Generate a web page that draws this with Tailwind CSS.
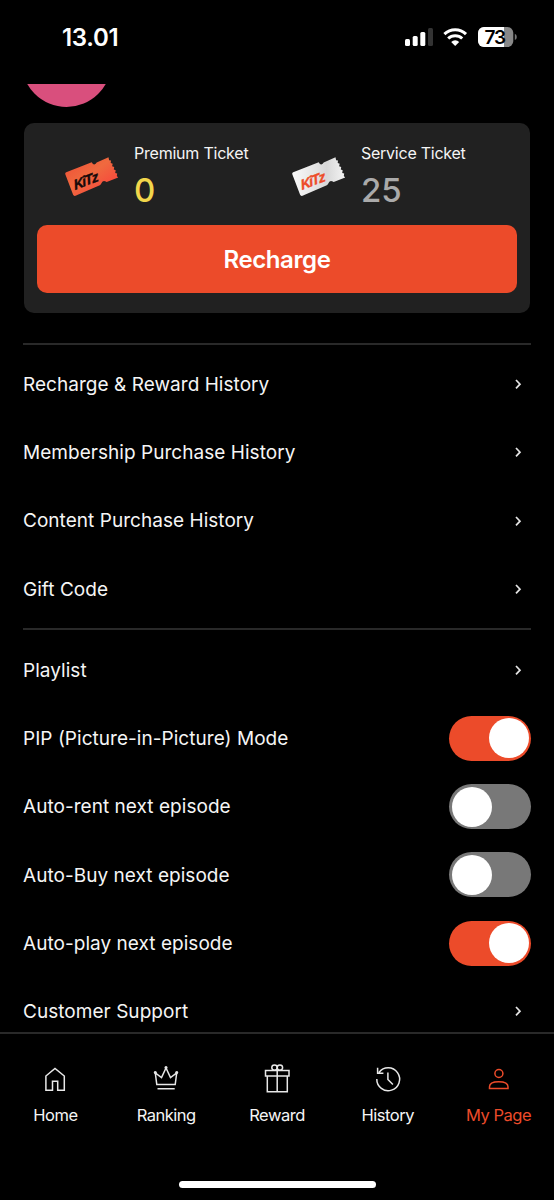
<!DOCTYPE html>
<html lang="en">
<head>
<meta charset="utf-8">
<meta name="viewport" content="width=device-width, initial-scale=1">
<title>My Page</title>
<script src="https://cdn.jsdelivr.net/npm/@tailwindcss/browser@4"></script>
</head>
<body class="bg-black">
<div class="flex h-[1200px] w-[554px] flex-col overflow-hidden bg-black font-['Inter','Liberation_Sans',sans-serif] text-[#f5f5f5]">
  <header class="flex h-[84px] shrink-0 items-start justify-between pt-[20px] pr-[37px] pl-[62px]">
    <div class="pt-[1px] text-[24px] leading-[34px] font-semibold tracking-[-0.3px] text-white">13.01</div>
    <svg class="mt-[5px]" width="112" height="24" viewBox="0 0 112 24">
      <g fill="#fff">
        <rect x="0" y="14" width="5" height="7" rx="1.500"/>
        <rect x="7.700" y="11" width="5" height="10" rx="1.500"/>
        <rect x="15.300" y="7" width="5" height="14" rx="1.500"/>
        <rect x="23" y="3" width="5" height="18" rx="1.500" fill="#333"/>
        <path d="M50.200 21l-4-4.100a6 6 0 0 1 8 0z"/>
      </g>
      <g fill="none" stroke="#fff" stroke-width="3">
        <path d="M39.400 9.200a15.500 15.500 0 0 1 21.600 0"/>
        <path d="M43.200 13.500a10 10 0 0 1 14 0"/>
      </g>
      <defs><clipPath id="cell"><rect x="73" y="2" width="35.300" height="20" rx="6"/></clipPath></defs>
      <g clip-path="url(#cell)"><rect x="73" y="2" width="36" height="20" fill="#888"/><rect x="73" y="2" width="26" height="20" fill="#fff"/></g>
      <path d="M109.800 8.700q2 1 2 3.200t-2 3.200z" fill="#777"/>
      <text x="79.500" y="18.800" font-size="19" font-weight="600" textLength="21.500" fill="#000">73</text>
    </svg>
  </header>
  <main class="flex min-h-0 flex-1 flex-col overflow-hidden">
    <div class="h-[39px] shrink-0 pl-[22px]">
      <svg width="90" height="24" viewBox="0 0 90 24"><circle cx="44.500" cy="-22" r="45" fill="#d94f7d"/></svg>
    </div>
    <section class="mx-[24px] flex h-[190px] shrink-0 flex-col rounded-[10px] bg-[#212121] px-[13px] pt-[18px]">
      <div class="flex h-[84px]">
        <div class="flex w-[227px] pl-[27px]">
          <svg class="mt-[13px] shrink-0" width="70" height="45" viewBox="0 0 70 45">
            <defs><linearGradient id="red" x1="0" y1="0" x2="1" y2="1"><stop offset="0" stop-color="#f04b35"/><stop offset=".45" stop-color="#ef6a3f"/><stop offset="1" stop-color="#fb363b"/></linearGradient></defs>
            <path d="M2.200 18.300L27.700 8.200q2.300 4.200 5 .3L44.500 3.300l.6 2.900 1.900.3-.3 2.600 2 .6-.6 2.600 2.100.7-.4 2.600 1.900.7-.5 2.600 2 .7-.4 2.500 1.400 1.500-11.500 4.500q-4.200-2.600-5.400 1.500-.5 1.200-1.500 1.700L11.500 41.800q-1.700.6-2.400-1L1.300 20.200q-.5-1.500.9-1.900z" fill="url(#red)"/>
            <text transform="translate(11 36) rotate(-21) skewX(-8)" font-family="Liberation Sans, sans-serif" font-size="14" font-weight="700" font-style="italic" letter-spacing="-1.200" fill="#17090a" stroke="#17090a" stroke-width=".4">KiTz</text>
          </svg>
          <div class="flex flex-col">
            <div class="h-[25px] text-[16px] leading-[25px] tracking-[-0.22px] whitespace-nowrap">Premium Ticket</div>
            <div class="mt-[3px] text-[33px] leading-[42px] font-medium tracking-[-0.2px] text-[#f2d64b]">0</div>
          </div>
        </div>
        <div class="flex pl-[27px]">
          <svg class="mt-[13px] shrink-0" width="70" height="45" viewBox="0 0 70 45">
            <defs><linearGradient id="silver"><stop offset="0" stop-color="#fafafa"/><stop offset=".65" stop-color="#d8d8d8"/><stop offset="1" stop-color="#f4f4f4"/></linearGradient></defs>
            <path d="M2.200 18.300L27.700 8.200q2.300 4.200 5 .3L44.500 3.300l.6 2.900 1.900.3-.3 2.600 2 .6-.6 2.600 2.100.7-.4 2.600 1.900.7-.5 2.600 2 .7-.4 2.500 1.400 1.500-11.500 4.500q-4.200-2.600-5.400 1.500-.5 1.200-1.500 1.700L11.500 41.800q-1.700.6-2.400-1L1.300 20.200q-.5-1.500.9-1.900z" fill="url(#silver)"/>
            <text transform="translate(11 36) rotate(-21) skewX(-8)" font-family="Liberation Sans, sans-serif" font-size="14" font-weight="700" font-style="italic" letter-spacing="-1.200" fill="#ed4b28" stroke="#ed4b28" stroke-width=".4">KiTz</text>
          </svg>
          <div class="flex flex-col">
            <div class="h-[25px] text-[16px] leading-[25px] tracking-[-0.25px] whitespace-nowrap">Service Ticket</div>
            <div class="mt-[3px] text-[33px] leading-[42px] font-medium tracking-[-0.2px] text-[#aaa]">25</div>
          </div>
        </div>
      </div>
      <button class="h-[68px] rounded-[10px] bg-[#ec4b2a] pt-[2px] text-[24px] font-semibold tracking-[-0.4px] text-white">Recharge</button>
    </section>
    <div class="mx-[23px] mt-[30px] h-[2px] shrink-0 bg-[#292929]"></div>
    <nav class="mt-[5px] flex shrink-0 flex-col pr-[23px] pl-[23px] text-[19px] tracking-[0.04px] [&_span]:pt-[2px] [&>div]:flex [&>div]:h-[68.250px] [&>div]:items-center [&>div]:justify-between [&_svg]:mr-[8px]">
      <div><span>Recharge &amp; Reward History</span><svg width="10" height="14" viewBox="0 0 10 14" fill="none" stroke="#e4e4e4" stroke-width="1.700"><path d="M3 3L7 7.200l-4 4.200"/></svg></div>
      <div><span>Membership Purchase History</span><svg width="10" height="14" viewBox="0 0 10 14" fill="none" stroke="#e4e4e4" stroke-width="1.700"><path d="M3 3L7 7.200l-4 4.200"/></svg></div>
      <div><span>Content Purchase History</span><svg width="10" height="14" viewBox="0 0 10 14" fill="none" stroke="#e4e4e4" stroke-width="1.700"><path d="M3 3L7 7.200l-4 4.200"/></svg></div>
      <div><span>Gift Code</span><svg width="10" height="14" viewBox="0 0 10 14" fill="none" stroke="#e4e4e4" stroke-width="1.700"><path d="M3 3L7 7.200l-4 4.200"/></svg></div>
    </nav>
    <div class="mx-[23px] mt-[5px] h-[2px] shrink-0 bg-[#292929]"></div>
    <section class="mt-[6px] flex shrink-0 flex-col pr-[23px] pl-[23px] text-[19px] tracking-[0.04px] [&_span]:pt-[2px] [&>div]:flex [&>div]:h-[68.250px] [&>div]:items-center [&>div]:justify-between [&_svg]:mr-[8px]">
      <div><span>Playlist</span><svg width="10" height="14" viewBox="0 0 10 14" fill="none" stroke="#e4e4e4" stroke-width="1.700"><path d="M3 3L7 7.200l-4 4.200"/></svg></div>
      <div><span>PIP (Picture-in-Picture) Mode</span><i class="flex h-[45px] w-[82px] items-center justify-end rounded-full bg-[#ec4b2a] px-[2.500px]"><b class="size-[40px] rounded-full bg-white"></b></i></div>
      <div><span>Auto-rent next episode</span><i class="flex h-[45px] w-[82px] items-center rounded-full bg-[#787878] px-[2.500px]"><b class="size-[40px] rounded-full bg-white"></b></i></div>
      <div><span>Auto-Buy next episode</span><i class="flex h-[45px] w-[82px] items-center rounded-full bg-[#787878] px-[2.500px]"><b class="size-[40px] rounded-full bg-white"></b></i></div>
      <div><span>Auto-play next episode</span><i class="flex h-[45px] w-[82px] items-center justify-end rounded-full bg-[#ec4b2a] px-[2.500px]"><b class="size-[40px] rounded-full bg-white"></b></i></div>
      <div><span>Customer Support</span><svg width="10" height="14" viewBox="0 0 10 14" fill="none" stroke="#e4e4e4" stroke-width="1.700"><path d="M3 3L7 7.200l-4 4.200"/></svg></div>
    </section>
  </main>
  <footer class="flex h-[168px] shrink-0 flex-col items-center border-t-2 border-[#292929] bg-black">
    <div class="grid w-full grid-cols-5 pt-[27px] text-[16.500px] tracking-[-0.500px] [&>div]:flex [&>div]:flex-col [&>div]:items-center [&>div]:gap-[6px] [&_span]:leading-[24px] [&_span]:whitespace-nowrap">
      <div><svg width="36" height="36" viewBox="0 0 36 36" fill="none" stroke="#e8e8e8" stroke-width="1.500"><path d="M8.900 15L18 7.500l9.300 7.500v14.200h-6.600v-9h-5.200v9H8.900z"/></svg><span>Home</span></div>
      <div><svg width="36" height="36" viewBox="0 0 36 36" fill="none" stroke="#e8e8e8" stroke-width="1.500"><path d="M8.800 23.600L7.300 12l6.200 4.500L18 7l4.500 9.500L28.700 12l-1.500 11.600zM9.500 27.700h17.200"/><g fill="#e8e8e8" stroke="none"><circle cx="7.300" cy="11.500" r="1.500"/><circle cx="18" cy="6.400" r="1.500"/><circle cx="28.700" cy="11.500" r="1.500"/></g></svg><span>Ranking</span></div>
      <div><svg width="36" height="36" viewBox="0 0 36 36" fill="none" stroke="#e8e8e8" stroke-width="1.500"><path d="M6.500 9.500h23.500v5.500h-23.500zM8.300 15v15.800h20V15M18.200 9.500V31"/><circle cx="15.500" cy="6.600" r="2.700"/><circle cx="20.900" cy="6.600" r="2.700"/></svg><span>Reward</span></div>
      <div><svg width="36" height="36" viewBox="0 0 36 36" fill="none" stroke="#e8e8e8" stroke-width="1.500"><path d="M6.800 18A11.400 11.400 0 1 0 9 11.500M7.600 6.700v5.600h5.800M17.900 11.500v7l5 5"/></svg><span>History</span></div>
      <div class="text-[#ec4b2a]"><svg width="36" height="36" viewBox="0 0 36 36" fill="none" stroke="#ec4b2a" stroke-width="1.500"><circle cx="17.900" cy="12.500" r="4"/><path d="M8.500 27.500v-1.700C8.500 22.500 12 20.800 17.700 20.800s9.300 1.700 9.300 5v1.700z"/></svg><span>My Page</span></div>
    </div>
    <div class="mt-[54px] h-[7px] w-[197px] rounded-full bg-white"></div>
  </footer>
</div>
</body>
</html>
